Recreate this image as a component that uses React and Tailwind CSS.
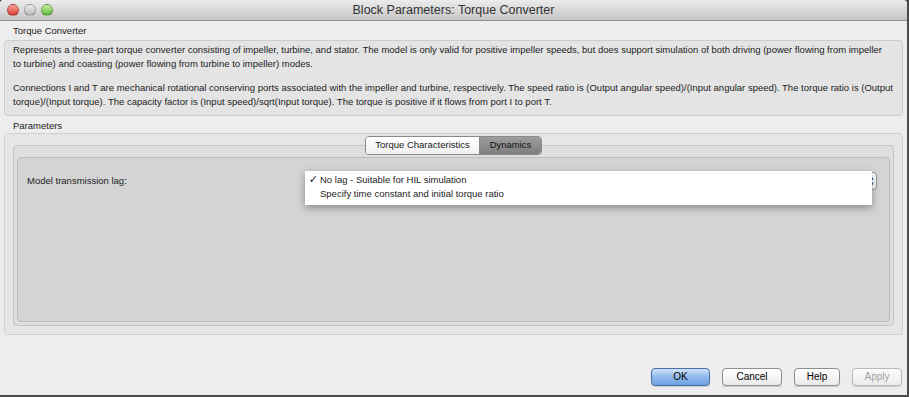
const font = { fontFamily: '"Liberation Sans", Arial, sans-serif' };

const Light = ({ color }) => (
  <span
    className={`inline-block w-[12px] h-[12px] rounded-full border border-black/25 ${color}`}
  />
);

const Button = ({ children, primary, disabled, width }) => (
  <button
    className={`${width} h-[18px] rounded-[4px] border text-[10px] leading-none shadow-[0_1px_1px_rgba(0,0,0,0.15)] ${
      primary
        ? "border-[#4a6fa8] bg-gradient-to-b from-[#cfe3fa] via-[#8fb9ec] to-[#6fa2e3] text-black"
        : disabled
        ? "border-[#b9b9b9] bg-gradient-to-b from-[#fbfbfb] to-[#ececec] text-[#a3a3a3]"
        : "border-[#8e8e8e] bg-gradient-to-b from-white to-[#eaeaea] text-black"
    }`}
  >
    {children}
  </button>
);

export default function App() {
  return (
    <div className="w-[909px] h-[397px] bg-[#4a4a4a] overflow-hidden" style={font}>
      <div className="w-[907px] h-[395px] bg-[#ededed] flex flex-col rounded-t-[4px] overflow-hidden">
        {/* title bar */}
        <div className="h-[21px] shrink-0 grid grid-cols-[1fr_auto_1fr] items-center bg-gradient-to-b from-[#ececec] to-[#c6c6c6] border-b border-[#8f8f8f]">
          <div className="flex items-center gap-[5px] pl-[7px]">
            <Light color="bg-gradient-to-b from-[#f6a39b] to-[#d9322a]" />
            <Light color="bg-gradient-to-b from-[#eeeeee] to-[#b9b9b9]" />
            <Light color="bg-gradient-to-b from-[#c9ef9f] to-[#5bb73a]" />
          </div>
          <div className="text-[12.5px] text-[#333]">Block Parameters: Torque Converter</div>
          <div />
        </div>

        <div className="flex-1 flex flex-col px-[4px] text-[9.5px] text-[#1c1c1c]">
          <div className="pl-[9px] pt-[3px] h-[19px]">Torque Converter</div>
          <div className="rounded-[4px] border border-[#cdcdcd] bg-[#e4e4e4] px-[8px] pt-[2px] pb-[6px] leading-[14px] whitespace-nowrap">
            <div>
              Represents a three-part torque converter consisting of impeller, turbine, and stator. The model is only valid for positive impeller speeds, but does support simulation of both driving (power flowing from impeller
            </div>
            <div>to turbine) and coasting (power flowing from turbine to impeller) modes.</div>
            <div className="h-[10px]" />
            <div>
              Connections I and T are mechanical rotational conserving ports associated with the impeller and turbine, respectively. The speed ratio is (Output angular speed)/(Input angular speed). The torque ratio is (Output
            </div>
            <div>torque)/(Input torque). The capacity factor is (Input speed)/sqrt(Input torque). The torque is positive if it flows from port I to port T.</div>
          </div>

          <div className="pl-[9px] pt-[3px] h-[17px]">Parameters</div>
          <div className="h-[202px] rounded-[4px] border border-[#d0d0d0] bg-[#e6e6e6] px-[8px] pt-[2px] flex flex-col">
            <div className="flex justify-center relative z-10 -mb-[10px]">
              <div className="flex h-[19px] rounded-[4px] border border-[#8a8a8a] overflow-hidden">
                <div className="w-[114px] flex items-center justify-center bg-gradient-to-b from-white to-[#f0f0f0] border-r border-[#8a8a8a]">
                  Torque Characteristics
                </div>
                <div className="w-[61px] flex items-center justify-center bg-gradient-to-b from-[#9d9d9d] to-[#7e7e7e] text-[#111]">
                  Dynamics
                </div>
              </div>
            </div>
            <div className="h-[181px] rounded-[4px] border border-[#c4c4c4] bg-[#dfdfdf] px-[3px] pt-[11px]">
              <div className="h-[165px] rounded-[4px] border border-[#bdbdbd] bg-[#d4d4d4] relative">
                <div className="flex items-center pt-[14px] pr-[12px]">
                  <div className="w-[288px] pl-[9px]">Model transmission lag:</div>
                  <div className="flex-1 h-[18px] rounded-[4px] border border-[#9a9a9a] bg-white flex justify-end items-center pr-[2px]">
                    <span className="text-[7px] leading-[6px] text-[#555] flex flex-col">
                      <span>▴</span>
                      <span>▾</span>
                    </span>
                  </div>
                </div>
                <div className="absolute left-[287px] top-[13px] w-[567px] h-[34px] bg-white shadow-[0_3px_8px_rgba(0,0,0,0.35)] pt-[2px] leading-[14px]">
                  <div className="flex items-center">
                    <span
                      className="w-[15px] text-right pr-[2px] text-[11px]"
                      style={{ fontFamily: '"DejaVu Sans", sans-serif' }}
                    >
                      ✓
                    </span>
                    No lag - Suitable for HIL simulation
                  </div>
                  <div className="pl-[15px]">Specify time constant and initial torque ratio</div>
                </div>
              </div>
            </div>
          </div>

          <div className="flex-1 flex items-end justify-end gap-[12px] pb-[9px] pr-[1px]">
            <Button primary width="w-[59px]">OK</Button>
            <Button width="w-[60px]">Cancel</Button>
            <Button width="w-[46px]">Help</Button>
            <Button disabled width="w-[50px]">Apply</Button>
          </div>
        </div>
      </div>
    </div>
  );
}
